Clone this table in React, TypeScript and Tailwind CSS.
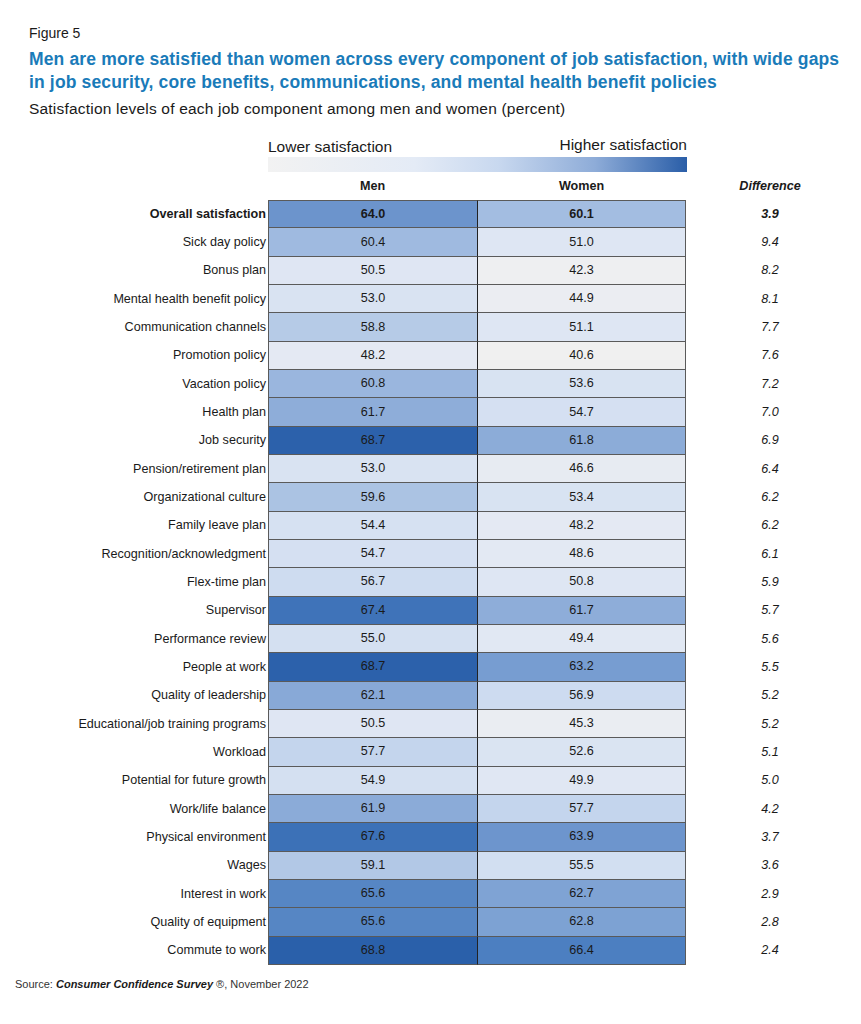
import React from 'react';

interface Row {
  label: string;
  men: number;
  women: number;
  diff: number;
  bold?: boolean;
}

const rows: Row[] = [
  { label: 'Overall satisfaction', men: 64.0, women: 60.1, diff: 3.9, bold: true },
  { label: 'Sick day policy', men: 60.4, women: 51.0, diff: 9.4 },
  { label: 'Bonus plan', men: 50.5, women: 42.3, diff: 8.2 },
  { label: 'Mental health benefit policy', men: 53.0, women: 44.9, diff: 8.1 },
  { label: 'Communication channels', men: 58.8, women: 51.1, diff: 7.7 },
  { label: 'Promotion policy', men: 48.2, women: 40.6, diff: 7.6 },
  { label: 'Vacation policy', men: 60.8, women: 53.6, diff: 7.2 },
  { label: 'Health plan', men: 61.7, women: 54.7, diff: 7.0 },
  { label: 'Job security', men: 68.7, women: 61.8, diff: 6.9 },
  { label: 'Pension/retirement plan', men: 53.0, women: 46.6, diff: 6.4 },
  { label: 'Organizational culture', men: 59.6, women: 53.4, diff: 6.2 },
  { label: 'Family leave plan', men: 54.4, women: 48.2, diff: 6.2 },
  { label: 'Recognition/acknowledgment', men: 54.7, women: 48.6, diff: 6.1 },
  { label: 'Flex-time plan', men: 56.7, women: 50.8, diff: 5.9 },
  { label: 'Supervisor', men: 67.4, women: 61.7, diff: 5.7 },
  { label: 'Performance review', men: 55.0, women: 49.4, diff: 5.6 },
  { label: 'People at work', men: 68.7, women: 63.2, diff: 5.5 },
  { label: 'Quality of leadership', men: 62.1, women: 56.9, diff: 5.2 },
  { label: 'Educational/job training programs', men: 50.5, women: 45.3, diff: 5.2 },
  { label: 'Workload', men: 57.7, women: 52.6, diff: 5.1 },
  { label: 'Potential for future growth', men: 54.9, women: 49.9, diff: 5.0 },
  { label: 'Work/life balance', men: 61.9, women: 57.7, diff: 4.2 },
  { label: 'Physical environment', men: 67.6, women: 63.9, diff: 3.7 },
  { label: 'Wages', men: 59.1, women: 55.5, diff: 3.6 },
  { label: 'Interest in work', men: 65.6, women: 62.7, diff: 2.9 },
  { label: 'Quality of equipment', men: 65.6, women: 62.8, diff: 2.8 },
  { label: 'Commute to work', men: 68.8, women: 66.4, diff: 2.4 },
];

// value -> rgb, hand-sampled from the heat map
const stops: [number, number, number, number][] = [
  [40.6, 240, 240, 240],
  [45, 235, 237, 242],
  [50, 224, 231, 243],
  [54, 215, 226, 242],
  [57, 205, 219, 240],
  [58, 192, 210, 236],
  [59, 180, 201, 230],
  [60.4, 159, 186, 224],
  [61.7, 142, 173, 217],
  [62.8, 125, 162, 211],
  [64, 108, 148, 204],
  [65.6, 86, 134, 196],
  [66.4, 76, 127, 193],
  [67.5, 62, 114, 184],
  [68.8, 42, 96, 170],
];

const heat = (v: number) => {
  if (v <= stops[0][0]) return `rgb(${stops[0][1]},${stops[0][2]},${stops[0][3]})`;
  for (let i = 1; i < stops.length; i++) {
    const a = stops[i - 1];
    const b = stops[i];
    if (v <= b[0]) {
      const t = (v - a[0]) / (b[0] - a[0]);
      const c = [1, 2, 3].map((k) => Math.round(a[k] + (b[k] - a[k]) * t));
      return `rgb(${c[0]},${c[1]},${c[2]})`;
    }
  }
  const l = stops[stops.length - 1];
  return `rgb(${l[1]},${l[2]},${l[3]})`;
};

export default function App() {
  return (
    <div className="w-[861px] h-[1024px] bg-white pl-[15px] text-[#1a1a1a] font-['Liberation_Sans',Arial,sans-serif]">
      <div className="pl-[14px] pt-[24px]">
        <div className="text-[14px] leading-[18px]">Figure 5</div>
        <h1 className="mt-[5.5px] text-[17.5px] leading-[23px] tracking-[0.15px] font-bold text-[#1a7bb9] whitespace-nowrap">
          Men are more satisfied than women across every component of job satisfaction, with wide gaps
          <br />
          in job security, core benefits, communications, and mental health benefit policies
        </h1>
        <div className="mt-[5.5px] text-[15.5px] leading-[20px] tracking-[0.2px]">
          Satisfaction levels of each job component among men and women (percent)
        </div>
      </div>

      {/* legend */}
      <div className="ml-[253px] w-[419px] mt-[18px]">
        <div className="flex justify-between items-end text-[15.5px] leading-[18px]">
          <span className="translate-y-[1px]">Lower satisfaction</span>
          <span className="-translate-y-[1px]">Higher satisfaction</span>
        </div>
        <div className="mt-[2px] h-[15px] bg-[linear-gradient(to_right,#f2f2f2_0%,#e4ebf6_35%,#c8d8ef_55%,#8eacd8_78%,#2a5ea8_100%)]" />
      </div>

      {/* column headers */}
      <div className="grid grid-cols-[253px_209px_209px_168px] h-[28px] items-center text-[12.6px] font-bold">
        <div />
        <div className="text-center">Men</div>
        <div className="text-center">Women</div>
        <div className="text-center italic">Difference</div>
      </div>

      {/* table */}
      <div className="flex flex-col">
        {rows.map((r, i) => (
          <div
            key={r.label}
            className="grid grid-cols-[253px_209px_209px_168px] h-[28.33px] items-stretch text-[12.6px]"
          >
            <div className={`flex items-center justify-end pr-[2px] whitespace-nowrap ${r.bold ? 'font-bold' : ''}`}>
              {r.label}
            </div>
            <div
              className={`flex items-center justify-center border-l border-b border-[#5a5a5a] ${i === 0 ? 'border-t' : ''} ${r.bold ? 'font-bold' : ''}`}
              style={{ backgroundColor: heat(r.men) }}
            >
              {r.men.toFixed(1)}
            </div>
            <div
              className={`flex items-center justify-center border-l border-r border-b border-l-[#222] border-r-[#5a5a5a] border-b-[#5a5a5a] ${i === 0 ? 'border-t border-t-[#5a5a5a]' : ''} ${r.bold ? 'font-bold' : ''}`}
              style={{ backgroundColor: heat(r.women) }}
            >
              {r.women.toFixed(1)}
            </div>
            <div className={`flex items-center justify-center italic ${r.bold ? 'font-bold' : ''}`}>
              {r.diff.toFixed(1)}
            </div>
          </div>
        ))}
      </div>

      <div className="mt-[11px] text-[11px] leading-[16px] text-[#333]">
        Source: <span className="font-bold italic text-[#1a1a1a]">Consumer Confidence Survey</span> ®, November 2022
      </div>
    </div>
  );
}
